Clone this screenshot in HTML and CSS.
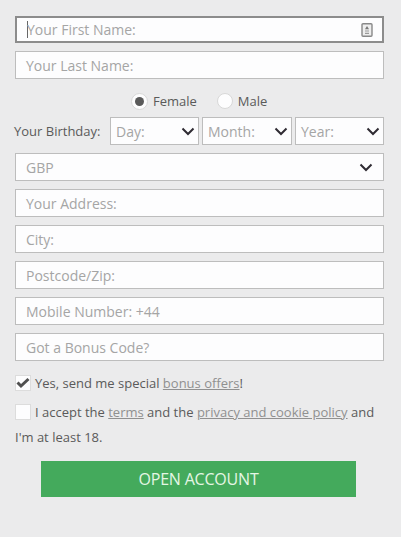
FILE: index.html
```html
<!DOCTYPE html>
<html lang="en">
<head>
    <meta charset="UTF-8">
    <meta name="viewport" content="width=device-width, initial-scale=1.0">
    <title>Open Account</title>
    <link rel="stylesheet" href="styles.css">
</head>
<body>
    <form class="signup">
        <div class="field field-focus">
            <span class="caret"></span>
            <span class="hint">Your First Name:</span>
            <svg class="card-icon" width="12" height="14" viewBox="0 0 12 14">
                <rect x="1" y="0.75" width="10" height="12.5" rx="1" fill="#eee" stroke="#888" stroke-width="1.4"/>
                <path d="M6 3 L8 6.2 H4 Z" fill="#777"/>
                <path d="M4 8 H8 M4 10.4 H8" stroke="#999" stroke-width="1.2"/>
            </svg>
        </div>
        <div class="field"><span class="hint">Your Last Name:</span></div>

        <div class="gender">
            <span class="radio radio-on"></span>
            <span class="gender-label">Female</span>
            <span class="radio radio-male"></span>
            <span class="gender-label">Male</span>
        </div>

        <div class="birthday">
            <span class="birthday-label">Your Birthday:</span>
            <div class="pick pick-day">
                <span class="hint">Day:</span>
                <svg class="chevron" width="14" height="9" viewBox="0 0 14 9"><path d="M1.5 1.5 L7 7 L12.5 1.5" fill="none" stroke="#2f2b33" stroke-width="2"/></svg>
            </div>
            <div class="pick pick-month">
                <span class="hint">Month:</span>
                <svg class="chevron" width="14" height="9" viewBox="0 0 14 9"><path d="M1.5 1.5 L7 7 L12.5 1.5" fill="none" stroke="#2f2b33" stroke-width="2"/></svg>
            </div>
            <div class="pick pick-year">
                <span class="hint">Year:</span>
                <svg class="chevron" width="14" height="9" viewBox="0 0 14 9"><path d="M1.5 1.5 L7 7 L12.5 1.5" fill="none" stroke="#2f2b33" stroke-width="2"/></svg>
            </div>
        </div>

        <div class="field">
            <span class="hint">GBP</span>
            <svg class="chevron" width="14" height="9" viewBox="0 0 14 9"><path d="M1.5 1.5 L7 7 L12.5 1.5" fill="none" stroke="#2f2b33" stroke-width="2"/></svg>
        </div>
        <div class="field"><span class="hint">Your Address:</span></div>
        <div class="field"><span class="hint">City:</span></div>
        <div class="field"><span class="hint">Postcode/Zip:</span></div>
        <div class="field"><span class="hint">Mobile Number: +44</span></div>
        <div class="field"><span class="hint">Got a Bonus Code?</span></div>

        <div class="check-row check-offers">
            <span class="box">
                <svg width="14" height="12" viewBox="0 0 14 12"><path d="M1.5 5.5 L5 9 L12.5 2" fill="none" stroke="#505050" stroke-width="3"/></svg>
            </span>
            <span>Yes, send me special <a href="#">bonus offers</a>!</span>
        </div>
        <div class="check-row check-terms">
            <span class="box"></span>
            <span>I accept the <a href="#">terms</a> and the <a href="#">privacy and cookie policy</a> and</span>
        </div>
        <div class="terms-rest">I'm at least 18.</div>

        <button type="button" class="open-btn">OPEN ACCOUNT</button>
    </form>
</body>
</html>
```

FILE: styles.css
```css
html, body { margin: 0; padding: 0; }
body { width: 401px; height: 537px; overflow: hidden; background-color: #ebebec; font-family: "Open Sans", sans-serif; font-size: 13px; color: #5a5a5a; }
.signup { padding: 16px 17px 0 15px; display: flex; flex-direction: column; }
.field { box-sizing: border-box; height: 28px; margin-bottom: 8px; padding: 0 10px; display: flex; align-items: center; justify-content: space-between; background-color: #fdfdfe; border: 1px solid #bdbdbd; }
.field-focus { height: 27px; border: 2px solid #8c8c8c; justify-content: flex-start; }
.hint { font-size: 14px; color: #a5a5a5; }
.caret { width: 1px; height: 17px; background-color: #666; margin-right: -1px; }
.card-icon { margin-left: auto; margin-right: -1px; }
.chevron { margin-top: 1px; }
.gender { height: 20px; margin: 4px 0 6px; padding-left: 116px; display: flex; align-items: center; }
.radio { box-sizing: border-box; width: 17px; height: 17px; border-radius: 50%; background-color: #fdfdfe; border: 1px solid #d8d8d8; display: flex; align-items: center; justify-content: center; }
.radio-on::before { content: ""; width: 9px; height: 9px; border-radius: 50%; background-color: #5a5a5a; }
.radio-male { width: 16px; height: 16px; margin-left: 20px; }
.gender-label { margin-left: 5px; }
.birthday { display: flex; align-items: center; gap: 3px; margin-bottom: 8px; margin-left: -1px; }
.birthday-label { width: 93px; white-space: nowrap; }
.pick { box-sizing: border-box; width: 89px; height: 28px; padding: 0 3px 0 5px; display: flex; align-items: center; justify-content: space-between; background-color: #fdfdfe; border: 1px solid #bdbdbd; }
.pick-month { width: 90px; }
.check-row { display: flex; align-items: center; height: 20px; }
.check-row a, .check-row a:visited { color: #909090; text-decoration: underline; }
.box { box-sizing: border-box; width: 16px; height: 16px; margin-right: 4px; flex-shrink: 0; background-color: #fdfdfe; border: 1px solid #dcdcdc; display: flex; align-items: center; justify-content: center; }
.check-offers { margin-top: 4px; }
.check-terms { margin-top: 9px; }
.terms-rest { margin-top: 5px; height: 20px; line-height: 20px; }
.open-btn { width: 315px; height: 36px; margin: 14px 0 0 26px; padding: 0; border: none; background-color: #44aa5c; color: #e4f6e4; font-family: "Open Sans", sans-serif; font-size: 16px; font-weight: 500; letter-spacing: -0.2px; }
```
